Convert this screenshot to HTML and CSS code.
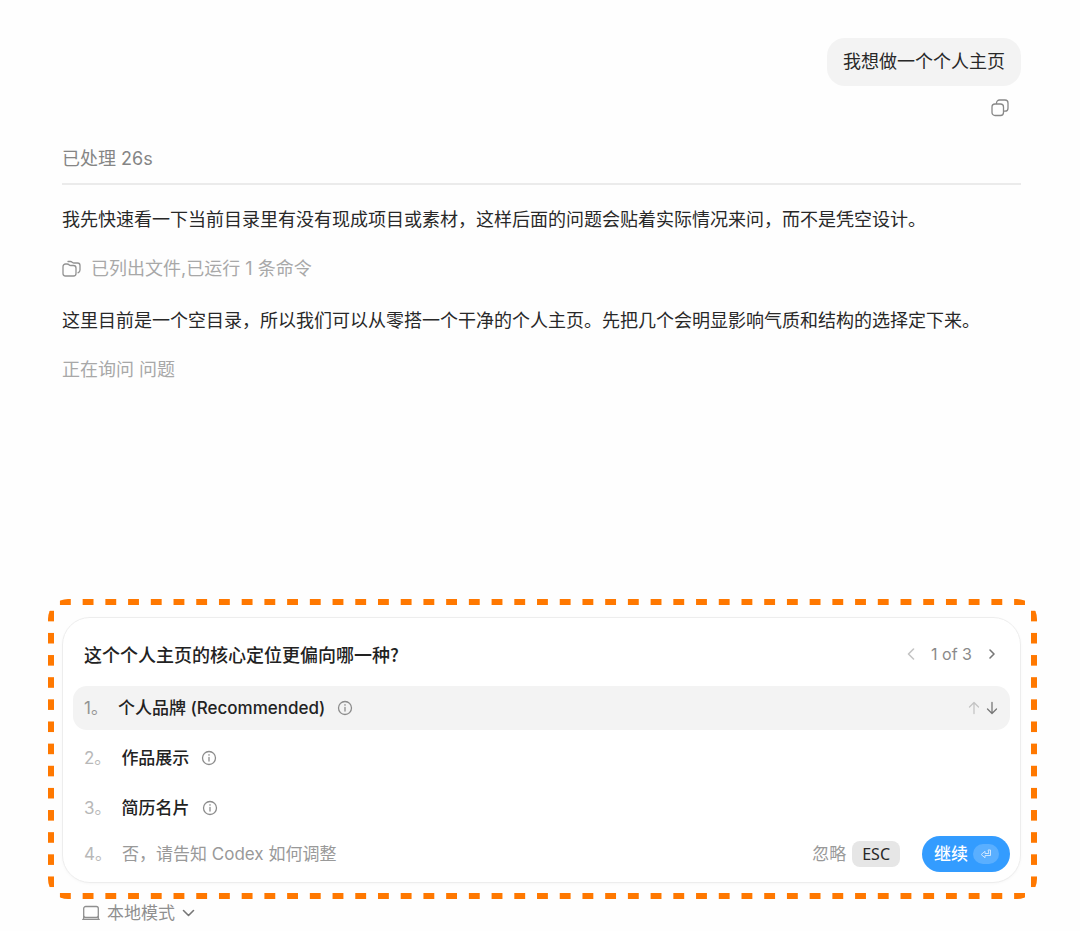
FILE: index.html
```html
<!DOCTYPE html>
<html lang="zh-CN">
<head>
<meta charset="utf-8">
<meta name="viewport" content="width=device-width, initial-scale=1">
<title>个人主页</title>
<link rel="stylesheet" href="styles.css">
</head>
<body>
<div class="page">
  <main class="thread">
    <div class="user-message">
      <p class="bubble">我想做一个个人主页</p>
      <button class="icon-button copy" type="button" aria-label="复制">
        <svg width="18" height="18" viewBox="0 0 18 18"><rect x="1" y="5" width="11.5" height="11.5" rx="3"/><path d="M5.5 4.5V4a3 3 0 0 1 3-3H14a3 3 0 0 1 3 3v5.200a3 3 0 0 1-3 3h-1"/></svg>
      </button>
    </div>
    <p class="status">已处理 26s</p>
    <p class="message">我先快速看一下当前目录里有没有现成项目或素材，这样后面的问题会贴着实际情况来问，而不是凭空设计。</p>
    <p class="activity">
      <svg width="19" height="18" viewBox="0 0 19 18"><path d="M1 6.500a2.500 2.500 0 0 1 2.500-2.500h1.700c.8 0 1.300.3 1.800.8s1 .7 1.800.7h2.700A2.500 2.500 0 0 1 14 8v5.500a2.500 2.500 0 0 1-2.500 2.500h-8A2.500 2.500 0 0 1 1 13.500z"/><path d="M6 1.500h2.500c.8 0 1.200.3 1.700.7s1 .8 1.800.8h3.500A2.500 2.500 0 0 1 18 5.500V10a3 3 0 0 1-2 2.800"/></svg>
      <span>已列出文件,已运行 1 条命令</span>
    </p>
    <p class="message">这里目前是一个空目录，所以我们可以从零搭一个干净的个人主页。先把几个会明显影响气质和结构的选择定下来。</p>
    <p class="activity">正在询问 问题</p>
  </main>

  <section class="highlight">
    <form class="card">
      <header class="card-head">
        <h2 class="question">这个个人主页的核心定位更偏向哪一种?</h2>
        <nav class="pager">
          <button class="icon-button faint" type="button" aria-label="上一题"><svg width="8" height="12" viewBox="0 0 8 12"><path class="bold" d="M6.500 1 1.500 6l5 5"/></svg></button>
          <span>1 of 3</span>
          <button class="icon-button strong" type="button" aria-label="下一题"><svg width="8" height="12" viewBox="0 0 8 12"><path class="bold" d="m2 2 4 4-4 4"/></svg></button>
        </nav>
      </header>
      <button class="option selected" type="button">
        <span class="number">1。</span>
        <span class="name">个人品牌 (Recommended)</span>
        <svg class="info" width="16" height="16" viewBox="0 0 16 16"><circle cx="8" cy="8" r="6.500"/><path d="M8 7.300v3.700M8 4.600v.6"/></svg>
        <span class="arrows">
          <svg class="faint" width="12" height="14" viewBox="0 0 12 14"><path d="M6 12.500V2M1.500 6 6 1.500 10.500 6"/></svg>
          <svg class="strong" width="12" height="14" viewBox="0 0 12 14"><path d="M6 1.500V12M1.500 8 6 12.500 10.500 8"/></svg>
        </span>
      </button>
      <button class="option" type="button">
        <span class="number">2。</span>
        <span class="name">作品展示</span>
        <svg class="info" width="16" height="16" viewBox="0 0 16 16"><circle cx="8" cy="8" r="6.500"/><path d="M8 7.300v3.700M8 4.600v.6"/></svg>
      </button>
      <button class="option" type="button">
        <span class="number">3。</span>
        <span class="name">简历名片</span>
        <svg class="info" width="16" height="16" viewBox="0 0 16 16"><circle cx="8" cy="8" r="6.500"/><path d="M8 7.300v3.700M8 4.600v.6"/></svg>
      </button>
      <div class="answer">
        <label class="number" for="custom">4。</label>
        <input class="custom" id="custom" type="text" placeholder="否，请告知 Codex 如何调整">
        <button class="dismiss" type="button">忽略 <kbd class="key">ESC</kbd></button>
        <button class="continue" type="submit">继续
          <span class="enter"><svg width="12" height="12" viewBox="0 0 12 12"><path d="M8.500 2h2v5.500H5v2.300L1.200 6.500 5 3.300v2.200h3.500z"/></svg></span>
        </button>
      </div>
    </form>
  </section>

  <footer class="mode">
    <button class="mode-button" type="button">
      <svg width="18" height="16" viewBox="0 0 18 16"><rect x="1.700" y="1.500" width="14.600" height="11" rx="2"/><path d="M.7 14.300h16.600M1.700 11.500v2.800M16.300 11.500v2.800"/></svg>
      <span>本地模式</span>
      <svg class="strong" width="13" height="8" viewBox="0 0 13 8"><path class="bold" d="m1.500 1.500 5 5 5-5"/></svg>
    </button>
  </footer>
</div>
</body>
</html>
```
FILE: styles.css
```css
* { box-sizing: border-box; }

body {
  margin: 0;
  background: #fefefe;
  color: #282828;
  font: 18px/28px Inter, "Noto Sans CJK SC", sans-serif;
}

p, h2 { margin: 0; }

button, input {
  border: 0;
  padding: 0;
  background: none;
  color: inherit;
  font: inherit;
}

svg {
  display: block;
  flex: none;
  fill: none;
  stroke: currentColor;
  stroke-width: 1.3;
  stroke-linecap: round;
  stroke-linejoin: round;
}

.bold { stroke-width: 1.6; }
.faint { color: #c4c4c4; }
.strong { color: #777; }

.page {
  display: flex;
  flex-direction: column;
  min-height: 100vh;
  padding: 38px 59px 5px 62px;
}

.thread { flex: 1; }

.user-message {
  display: flex;
  flex-direction: column;
  align-items: flex-end;
  gap: 13px;
}

.bubble {
  padding: 10px 16px;
  border-radius: 18px;
  background: #f3f3f3;
}

.copy {
  margin-right: 12px;
  color: #888;
}

.status {
  margin-top: 28px;
  padding-bottom: 10px;
  border-bottom: 2px solid #ebebeb;
  color: #858585;
}

.message { margin-top: 21px; }

.activity {
  display: flex;
  align-items: center;
  gap: 10px;
  margin-top: 21px;
  color: #a8a8a8;
}

.activity svg { color: #929292; }

.activity + .message { margin-top: 24px; }

/* Dashed outline: two strips along the top and bottom, two along the sides */
.highlight {
  position: relative;
  margin: 0 -16px 0 -14px;
  padding: 18px 16px 16px 14px;
  border-radius: 20px;
  overflow: hidden;
}

.highlight::before,
.highlight::after {
  content: "";
  position: absolute;
  pointer-events: none;
}

.highlight::before {
  inset: 0 6px;
  background:
    linear-gradient(90deg, transparent 24%, #ff7800 24% 76%, transparent 76%) left top / calc(100% / 43) 6px repeat-x,
    linear-gradient(90deg, transparent 24%, #ff7800 24% 76%, transparent 76%) left bottom / calc(100% / 43) 6px repeat-x;
}

.highlight::after {
  inset: 6px 0;
  background:
    linear-gradient(transparent 24%, #ff7800 24% 76%, transparent 76%) left top / 6px calc(100% / 13) repeat-y,
    linear-gradient(transparent 24%, #ff7800 24% 76%, transparent 76%) right top / 6px calc(100% / 13) repeat-y;
}

.card {
  display: flex;
  flex-direction: column;
  gap: 6px;
  padding: 10px;
  border: 1px solid #ededed;
  border-radius: 28px;
  background: #fff;
  box-shadow: 0 1px 3px #00000008;
  font-size: 17px;
}

.card-head {
  display: flex;
  align-items: center;
  justify-content: space-between;
  min-height: 52px;
  padding: 0 14px 0 11px;
}

.question {
  color: #222;
  font: 500 18px/28px "Noto Sans CJK SC", sans-serif;
}

.pager {
  display: flex;
  align-items: center;
  gap: 16px;
  color: #8a8a8a;
  font-size: 16px;
}

.option {
  display: flex;
  align-items: center;
  min-height: 44px;
  padding: 0 12px 0 11px;
  border-radius: 14px;
  text-align: left;
}

.selected { background: #f3f3f3; }

.number {
  margin-right: 10px;
  color: #b8b8b8;
}

.selected .number { color: #929292; }

.name {
  margin-right: 12px;
  color: #222;
  font-weight: 500;
}

.info { color: #8c8c8c; }

.arrows {
  display: flex;
  gap: 6px;
  margin-left: auto;
}

.answer {
  display: flex;
  align-items: center;
  min-height: 36px;
  padding-left: 11px;
}

.custom {
  flex: 1;
  min-width: 0;
}

.custom::placeholder {
  color: #999;
  opacity: 1;
}

.dismiss {
  display: flex;
  align-items: center;
  gap: 6px;
  margin-right: 22px;
  color: #999;
}

.key {
  padding: 0 10px;
  border-radius: 8px;
  background: #e6e6e6;
  color: #282828;
  font: 16px/26px "Noto Sans", sans-serif;
}

.continue {
  display: flex;
  align-items: center;
  gap: 5px;
  height: 36px;
  padding: 0 11px 0 12px;
  border-radius: 18px;
  background: #339cff;
  color: #fff;
  font-weight: 500;
}

.enter {
  padding: 4px 7px;
  border-radius: 10px;
  background: #5aafff;
  color: #cde6ff;
}

.enter svg { stroke-width: 1; }

.mode {
  display: flex;
  height: 27px;
}

.mode-button {
  display: flex;
  align-items: center;
  gap: 7px;
  margin-left: 20px;
  color: #8f8f8f;
  font-size: 17px;
}
```
